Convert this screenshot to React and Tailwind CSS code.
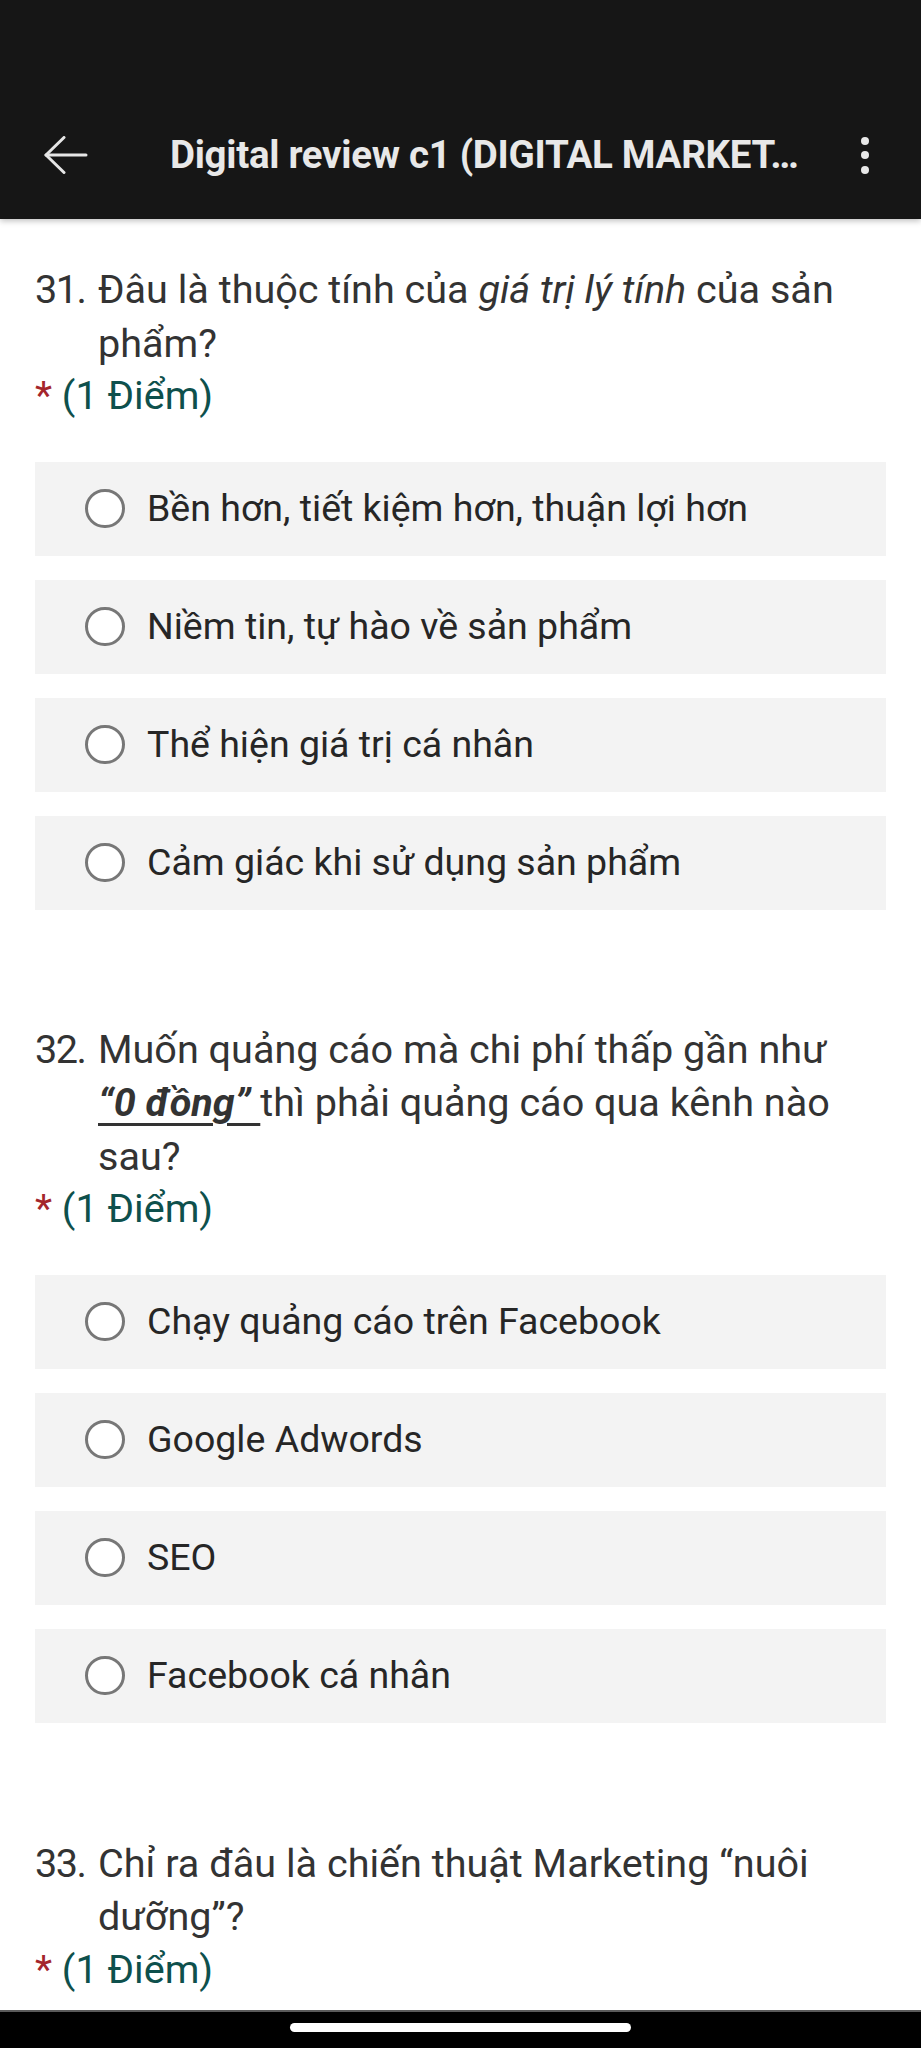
import React from "react";

const font = { fontFamily: 'Roboto, "Noto Sans", "Liberation Sans", sans-serif' };

function Option({ text }) {
  return (
    <div className="flex h-[94px] items-center bg-[#f3f3f3] pl-[50px]">
      <div className="h-[39px] w-[40px] shrink-0 rounded-full border-[3px] border-[#777777] bg-white" />
      <div className="ml-[22px] text-[37.5px] leading-none text-[#262626]">{text}</div>
    </div>
  );
}

function Question({ num, children, options, className = "" }) {
  return (
    <div className={className}>
      <div className="flex text-[39.6px] leading-[53.5px] text-[#333333]">
        <div className="w-[63px] shrink-0 tracking-[-1.5px]">{num}.</div>
        <div className="flex-1">{children}</div>
      </div>
      <div className="text-[39.6px] leading-[51.5px]">
        <span className="text-[#a4262c]">*</span>
        <span className="text-[#0e504c]"> (1 Điểm)</span>
      </div>
      {options && (
        <div className="mt-[40px] flex flex-col gap-[24px]">
          {options.map((o) => (
            <Option key={o} text={o} />
          ))}
        </div>
      )}
    </div>
  );
}

export default function App() {
  return (
    <div className="relative h-[2048px] w-[921px] overflow-hidden bg-white" style={font}>
      <header className="relative z-10 h-[219px] bg-[#161616] pt-[99px] shadow-[0_2px_6px_rgba(0,0,0,0.25)]">
        <div className="flex h-[112px] items-center">
          <div className="ml-[44px] flex w-[126px] items-center">
            <svg width="44" height="38" viewBox="0 0 44 38" fill="none" stroke="#e6e6e6" strokeWidth="3" strokeLinecap="round" strokeLinejoin="round">
              <path d="M2 19 H42" />
              <path d="M20 1.5 L2 19 L20 36.5" />
            </svg>
          </div>
          <div className="flex-1 whitespace-nowrap text-[38.5px] font-bold leading-none tracking-[-0.3px] text-[#e8e8e8]">
            Digital review c1 (DIGITAL MARKET…
          </div>
          <div className="mr-[52px] flex flex-col items-center gap-[6.5px]">
            <div className="h-[8px] w-[8px] rounded-full bg-[#e8e8e8]" />
            <div className="h-[8px] w-[8px] rounded-full bg-[#e8e8e8]" />
            <div className="h-[8px] w-[8px] rounded-full bg-[#e8e8e8]" />
          </div>
        </div>
      </header>

      <main className="px-[35px]">
        <Question
          num="31"
          className="pt-[44px]"
          options={[
            "Bền hơn, tiết kiệm hơn, thuận lợi hơn",
            "Niềm tin, tự hào về sản phẩm",
            "Thể hiện giá trị cá nhân",
            "Cảm giác khi sử dụng sản phẩm",
          ]}
        >
          Đâu là thuộc tính của <i>giá trị lý tính</i> của sản phẩm?
        </Question>

        <Question
          num="32"
          className="pt-[113px]"
          options={["Chạy quảng cáo trên Facebook", "Google Adwords", "SEO", "Facebook cá nhân"]}
        >
          Muốn quảng cáo mà chi phí thấp gần như{" "}
          <span className="whitespace-nowrap font-bold italic underline decoration-[2.5px] underline-offset-[7px]">“0 đồng”&nbsp;</span>
          thì phải quảng cáo qua kênh nào sau?
        </Question>

        <Question num="33" className="pt-[114px]">
          Chỉ ra đâu là chiến thuật Marketing “nuôi dưỡng”?
        </Question>
      </main>

      <div className="absolute bottom-0 left-0 flex h-[38px] w-[921px] items-start justify-center border-t-[2px] border-[#5a5a5a] bg-black pt-[11px]">
        <div className="h-[9px] w-[341px] rounded-full bg-white" />
      </div>
    </div>
  );
}
